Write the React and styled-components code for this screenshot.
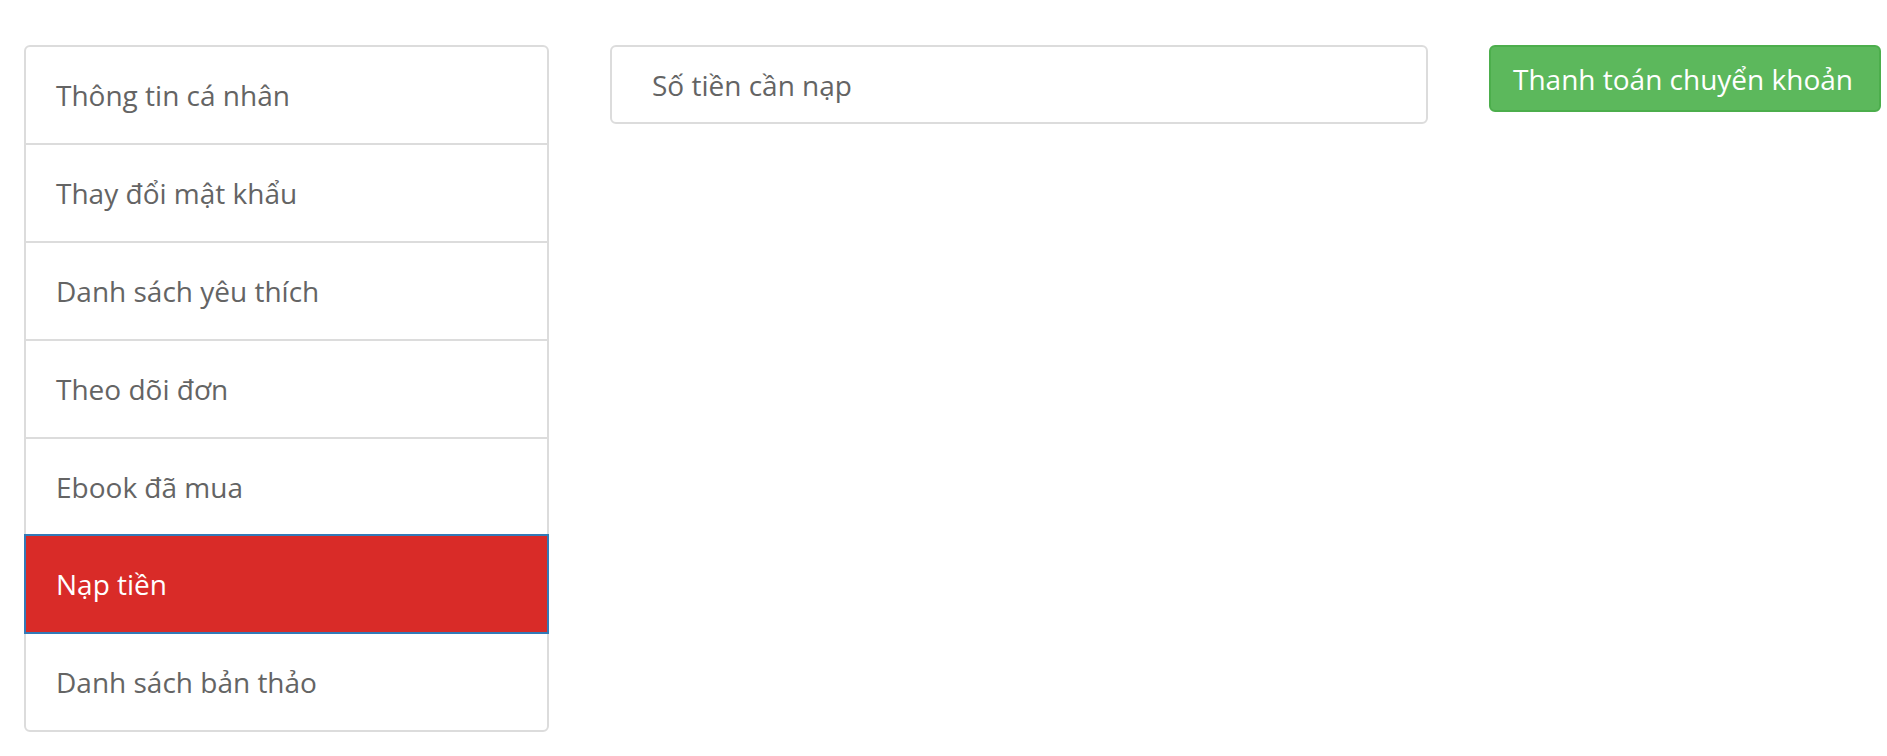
import React, { useState } from 'react'
import styled, { createGlobalStyle } from 'styled-components'

const GlobalStyle = createGlobalStyle`
    body {
        margin: 0;
        background: #fff;
        font-family: "Open Sans", "Liberation Sans", sans-serif;
    }
`

const menu = [
    'Thông tin cá nhân',
    'Thay đổi mật khẩu',
    'Danh sách yêu thích',
    'Theo dõi đơn',
    'Ebook đã mua',
    'Nạp tiền',
    'Danh sách bản thảo',
]

function App() {
    const [active, setActive] = useState(5)
    return (
        <Page>
            <GlobalStyle />
            <SideMenu>
                {menu.map((label, i) => (
                    <MenuItem key={label} active={i === active} onClick={() => setActive(i)}>
                        {label}
                    </MenuItem>
                ))}
            </SideMenu>
            <AmountInput placeholder="Số tiền cần nạp" />
            <PayButton>Thanh toán chuyển khoản</PayButton>
        </Page>
    )
}

export default App

const Page = styled.div`
    display: flex;
    align-items: flex-start;
    padding: 45px 9px 0 24px;
`
const SideMenu = styled.div`
    width: 525px;
    flex: none;
    display: flex;
    flex-direction: column;
`
const MenuItem = styled.div.withConfig({ shouldForwardProp: p => p !== 'active' })`
    height: 99.9px;
    box-sizing: border-box;
    display: flex;
    align-items: center;
    padding: 0 30px;
    margin-bottom: -2px;
    border: 2px solid ${p => (p.active ? '#337ab7' : '#dcdcdc')};
    background: ${p => (p.active ? '#d92b28' : '#fff')};
    color: ${p => (p.active ? '#fff' : '#646464')};
    font-size: 28px;
    cursor: pointer;
    position: relative;
    z-index: ${p => (p.active ? 2 : 1)};
    &:first-child {
        border-radius: 6px 6px 0 0;
    }
    &:last-child {
        border-radius: 0 0 6px 6px;
        margin-bottom: 0;
    }
`
const AmountInput = styled.input`
    margin-left: 61px;
    width: 818px;
    height: 79px;
    box-sizing: border-box;
    flex: none;
    border: 2px solid #dcdcdc;
    border-radius: 6px;
    padding: 0 40px;
    font-family: inherit;
    font-size: 28px;
    color: #646464;
    outline: none;
    &::placeholder {
        color: #646464;
    }
`
const PayButton = styled.button`
    margin-left: 61px;
    width: 392px;
    height: 67px;
    box-sizing: border-box;
    flex: none;
    border: 2px solid #4cae4c;
    border-radius: 6px;
    background: #5cb85c;
    color: #fff;
    font-family: inherit;
    font-size: 28px;
    padding: 0 4px 0 0;
    cursor: pointer;
`
